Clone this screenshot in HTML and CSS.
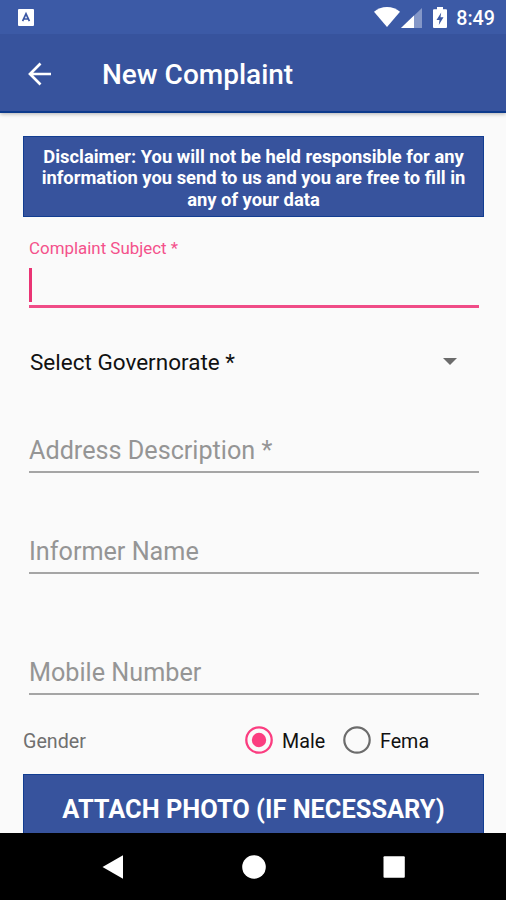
FILE: index.html
```html
<!DOCTYPE html>
<html lang="en">
<head>
<meta charset="utf-8">
<title>New Complaint</title>
<link rel="stylesheet" href="styles.css">
</head>
<body>
<div class="screen">
  <header class="top">
    <div class="status">
      <svg class="status-app" viewBox="0 0 16 17"><rect width="16" height="17" rx="1" fill="#fff"/><path d="M4.6 12.2 8 4.8l3.4 7.4M5.8 10h4.4" fill="none" stroke="#3b58a4" stroke-width="1.7"/></svg>
      <div class="status-icons">
        <svg class="wifi" viewBox="0 0 26 20"><path d="M0 4.8C3.500 1.800 8 0 13 0s9.500 1.800 13 4.800L13 20z" fill="#fff"/></svg>
        <svg class="signal" viewBox="0 0 21 20"><path d="M0 20 21 0v20z" fill="#8497c8"/><path d="M0 20 13 7.600V20z" fill="#fff"/></svg>
        <svg class="battery" viewBox="0 0 14 21"><path d="M4 0h6v2.200h3q1 0 1 1V20q0 1-1 1H1q-1 0-1-1V3.200q0-1 1-1h3z" fill="#fff"/><path d="M8.200 5.500 3.500 13h3l-.7 5L10.500 10.300h-3z" fill="#3b58a4"/></svg>
        <span class="clock">8:49</span>
      </div>
    </div>
    <div class="appbar">
      <svg class="back" viewBox="0 0 24 24"><path d="M23 12H2.500M12.500 1.500 2 12l10.500 10.500" fill="none" stroke="#fff" stroke-width="2.700"/></svg>
      <h1 class="title">New Complaint</h1>
    </div>
  </header>
  <main class="form">
    <p class="disclaimer">Disclaimer: You will not be held responsible for any<br>information you send to us and you are free to fill in<br>any of your data</p>
    <div class="field subject">
      <span class="label"><span>Complaint Subject *</span></span>
      <span class="caret"></span>
    </div>
    <div class="select"><span>Select Governorate *</span><svg class="arrow" viewBox="0 0 14 7"><path d="M0 0h14L7 7z" fill="#6b6b6b"/></svg></div>
    <div class="field address"><span>Address Description *</span></div>
    <div class="field informer"><span>Informer Name</span></div>
    <div class="field mobile"><span>Mobile Number</span></div>
    <div class="gender">
      <span class="gender-label">Gender</span>
      <svg class="radio" viewBox="0 0 28 28"><circle cx="14" cy="14" r="12.700" fill="none" stroke="#fb3d80" stroke-width="2.300"/><circle cx="14" cy="14" r="7.200" fill="#fb3d80"/></svg>
      <span class="male">Male</span>
      <svg class="radio" viewBox="0 0 28 28"><circle cx="14" cy="14" r="12.700" fill="none" stroke="#6c6c6c" stroke-width="2.200"/></svg>
      <span class="female">Fema</span>
    </div>
    <div class="attach"><span>ATTACH PHOTO (IF NECESSARY)</span></div>
  </main>
  <nav class="navbar">
    <svg viewBox="0 0 24 24"><path d="M1.500 12 22 .3v23.400z" fill="#fff"/></svg>
    <svg viewBox="0 0 24 24"><circle cx="12" cy="12" r="11.800" fill="#fff"/></svg>
    <svg viewBox="0 0 24 24"><rect x="1.500" y="1.200" width="21.300" height="21.600" rx="1" fill="#fff"/></svg>
  </nav>
</div>
</body>
</html>
```
FILE: styles.css
```css
* { box-sizing: border-box; margin: 0; padding: 0; }
body { background: #fafafa; font-family: Roboto, sans-serif; color: #111; }
svg { display: block; flex: none; }
.screen { width: 506px; height: 900px; display: flex; flex-direction: column; overflow: hidden; white-space: nowrap; }
.top { height: 113px; background: #37539d; border-bottom: 2px solid #0d3a8c; box-shadow: 0 1px 4px rgba(0, 0, 0, .3); flex: none; }
.status { height: 34px; background: #3c5aa6; display: flex; justify-content: space-between; align-items: flex-start; padding: 0 11px 0 18px; }
.status-app { width: 16px; height: 17px; margin-top: 9px; }
.status-icons { display: flex; align-items: flex-start; }
.wifi { width: 26px; height: 20px; margin-top: 7px; }
.signal { width: 21px; height: 20px; margin: 8px 0 0 1px; }
.battery { width: 14px; height: 21px; margin: 7px 0 0 11px; }
.clock { font-size: 19.700px; font-weight: 500; line-height: 24px; margin: 7px 0 0 9px; color: #fff; }
.appbar { height: 77px; display: flex; align-items: center; padding: 5px 0 0 28px; color: #fff; }
.back { width: 24px; height: 24px; margin-top: -3px; }
.title { margin-left: 50px; font-size: 28px; font-weight: 500; line-height: 34px; }
.form { flex: 1; min-height: 0; overflow: hidden; padding: 23px 22px 0 23px; }
.disclaimer { height: 81px; border: 1px solid #123d91; background: #37539d; color: #fff; font-size: 18.350px; font-weight: 700; line-height: 21.600px; text-align: center; padding-top: 8.500px; }
.field { margin: 0 5px 0 6px; border-bottom: 2px solid #a5a5a5; color: #959595; font-size: 25.200px; line-height: 32px; }
.subject { height: 91px; border-bottom: 3px solid #f04c87; color: #f4518b; }
.label { display: block; font-size: 16.900px; line-height: 20px; padding-top: 21px; }
.caret { display: block; width: 3px; height: 34px; margin-top: 10px; background: #ea3474; }
.select { display: flex; justify-content: space-between; align-items: center; height: 30px; margin: 39px 27px 0 7px; font-size: 22.500px; }
.arrow { width: 14px; height: 7px; margin-top: -2px; }
.address { height: 38px; margin-top: 58px; }
.informer { height: 38px; margin-top: 63px; }
.mobile { height: 38px; margin-top: 83px; }
.gender { display: flex; align-items: center; height: 28px; margin-top: 31px; font-size: 19.700px; }
.gender span { padding-top: 2px; }
.gender-label { width: 222px; color: #707070; }
.radio { width: 28px; height: 28px; }
.male { margin-left: 9px; width: 61px; }
.female { margin-left: 9px; }
.attach { height: 70px; margin-top: 20px; padding-top: 19px; border: 1px solid #123d91; background: #37539d; color: #fff; font-size: 25.400px; font-weight: 700; line-height: 30px; text-align: center; }
.navbar { height: 67px; flex: none; background: #000; display: flex; justify-content: space-between; align-items: center; padding: 0 100px 0 101px; }
.navbar svg { width: 24px; height: 24px; }
```
